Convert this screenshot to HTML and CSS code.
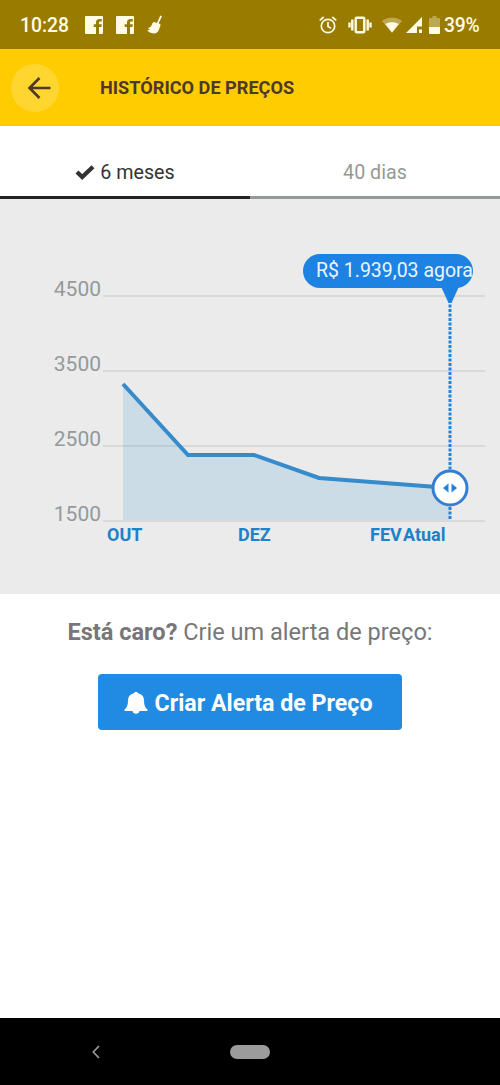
FILE: index.html
```html
<!DOCTYPE html>
<html lang="pt-BR">
<head>
<meta charset="utf-8">
<title>Histórico de Preços</title>
<link rel="stylesheet" href="styles.css">
</head>
<body>
<div class="screen">
  <div class="status">
    <span class="clock">10:28</span>
    <div class="notices">
      <svg width="18" height="18" viewBox="0 0 18 18"><path fill="currentColor" d="M1 0h16a1 1 0 0 1 1 1v16a1 1 0 0 1-1 1h-3v-7h2.400l.4-2.700H14V6.800c0-.8.3-1.300 1.300-1.300h1.500V3h-2.300c-2.300 0-3.500 1.400-3.500 3.500v1.800H8.700V11H11v7H1a1 1 0 0 1-1-1V1a1 1 0 0 1 1-1z"/></svg>
      <svg width="18" height="18" viewBox="0 0 18 18"><path fill="currentColor" d="M1 0h16a1 1 0 0 1 1 1v16a1 1 0 0 1-1 1h-3v-7h2.400l.4-2.700H14V6.800c0-.8.3-1.300 1.300-1.300h1.500V3h-2.300c-2.300 0-3.500 1.400-3.500 3.500v1.800H8.700V11H11v7H1a1 1 0 0 1-1-1V1a1 1 0 0 1 1-1z"/></svg>
      <svg width="16" height="19" viewBox="0 0 16 19"><path fill="currentColor" d="M13.300.5l1.700.8-3.300 7 2 1.500-1.500 4.200c-.8 2.500-2.300 4.300-4.400 4.500-3.200 0-6-1.200-7.500-3.300l2.600-.5-2.200-1.800c2.600.2 3.800-1.800 4.900-5.200l1.800-.8 2.600 1z"/></svg>
    </div>
    <div class="system">
      <svg width="18" height="18" viewBox="0 0 18 18" fill="none" stroke="currentColor" stroke-width="1.700"><circle cx="9" cy="10" r="6.700"/><path d="M9 6v4.500l3 1.700M.7 4.300l4-3.300M17.300 4.300l-4-3.300"/></svg>
      <svg class="vibrate" width="24" height="18" viewBox="0 0 24 18" fill="none" stroke="currentColor" stroke-width="2.400"><rect x="7.700" y="1.700" width="8.600" height="14.600" rx="1"/><path d="M4.300 3.500v11M19.700 3.500v11M1.500 6.500v5M22.500 6.500v5"/></svg>
      <svg class="wifi" width="20" height="16" viewBox="0 0 20 16"><path fill="currentColor" opacity=".35" d="M0 4C6-.8 14-.8 20 4L10 16z"/><path fill="currentColor" d="M3.300 7C7 4.800 13 4.800 16.700 7L10 15.500z"/></svg>
      <svg class="signal" width="16" height="16" viewBox="0 0 16 16"><path fill="currentColor" d="M16 0v9.500h-5V16H0zM13 12.500h3V16h-3z"/></svg>
      <svg class="battery" width="11" height="18" viewBox="0 0 11 18"><path fill="currentColor" opacity=".35" d="M3.500 0h4v2H10a1 1 0 0 1 1 1v8H0V3a1 1 0 0 1 1-1h2.500z"/><path fill="currentColor" d="M0 11h11v6a1 1 0 0 1-1 1H1a1 1 0 0 1-1-1z"/></svg>
      <span class="percent">39%</span>
    </div>
  </div>

  <header class="appbar">
    <div class="back">
      <svg width="24" height="24" viewBox="0 0 24 24" fill="none" stroke="currentColor" stroke-width="2.600"><path d="M23.500 12H3M12.500 2L2.500 12l10 10"/></svg>
    </div>
    <h1 class="title">HISTÓRICO DE PREÇOS</h1>
  </header>

  <nav class="tabs">
    <div class="tab tab-active">
      <svg width="20" height="16" viewBox="0 0 20 16"><path fill="none" stroke="currentColor" stroke-width="4.200" d="M2 7l5.200 5L18 1.700"/></svg>
      <span>6 meses</span>
    </div>
    <div class="tab"><span>40 dias</span></div>
  </nav>

  <svg class="chart" width="500" height="395" viewBox="0 199 500 395">
    <path class="grid" d="M103 296H485M103 371H485M103 446H485M103 521H485"/>
    <g class="scale">
      <text x="101" y="295.500">4500</text>
      <text x="101" y="370.500">3500</text>
      <text x="101" y="445.500">2500</text>
      <text x="101" y="520.500">1500</text>
    </g>
    <path class="area" d="M123 384L188 455H254L319 478L450 488V520H123z"/>
    <path class="line" d="M123 384L188 455H254L319 478L450 488"/>
    <g class="months">
      <text x="107" y="540.500">OUT</text>
      <text x="238" y="540.500">DEZ</text>
      <text x="370" y="540.500">FEV</text>
      <text x="403" y="540.500">Atual</text>
    </g>
    <path class="cursor" d="M450 300V520"/>
    <rect class="bubble" x="303" y="254" width="170" height="34" rx="17"/>
    <path class="bubble" d="M441 286.500h18L451.500 303h-3z"/>
    <text class="price" x="316" y="277">R$ 1.939,03 agora</text>
    <circle class="knob" cx="450" cy="488" r="17"/>
    <path class="arrows" d="M448.500 483.500v9l-5.500-4.500zM451.500 483.500v9l5.500-4.500z"/>
  </svg>

  <main class="alert">
    <p class="question"><b>Está caro?</b> Crie um alerta de preço:</p>
    <button class="create">
      <svg width="24" height="22" viewBox="0 0 24 22"><path fill="currentColor" d="M12 0c1 0 1.800.5 2 1.200 4 .8 6 3.500 6 7.300 0 4.500 1 7 3.500 9V19H15.500c-.3 1.700-1.700 2.800-3.500 2.800S8.800 20.700 8.500 19H.5v-1.500c2.500-2 3.500-4.500 3.500-9 0-3.800 2-6.500 6-7.300C10.200.5 11 0 12 0z"/></svg>
      <span>Criar Alerta de Preço</span>
    </button>
  </main>

  <footer class="navbar">
    <svg width="8" height="14" viewBox="0 0 8 14" fill="none" stroke="currentColor" stroke-width="1.700"><path d="M7 1L1.300 7 7 13"/></svg>
    <span class="pill"></span>
  </footer>
</div>
</body>
</html>
```
FILE: styles.css
```css
* { box-sizing: border-box; }
body { margin: 0; background: #fff; font-family: Roboto, "Liberation Sans", sans-serif; }
svg { display: block; flex: none; }
.screen { display: flex; flex-direction: column; width: 500px; height: 1085px; }

.status { display: flex; align-items: center; height: 49px; padding: 0 20px; background: #997b00; color: #fffbe6; }
.clock, .percent { font-size: 19.300px; font-weight: 500; line-height: 24px; }
.clock { width: 65px; padding-top: 2px; }
.notices { display: flex; align-items: center; gap: 13px; }
.system { display: flex; align-items: center; margin-left: auto; }
.vibrate { margin-left: 11px; }
.wifi { margin-left: 10px; }
.signal { margin-left: 4px; }
.battery { margin-left: 7px; }
.percent { width: 36px; margin-left: 4px; padding-top: 2px; letter-spacing: -.2px; }

.appbar { display: flex; align-items: center; height: 77px; padding-left: 11px; background: #ffcc02; color: #4d3926; }
.back { display: flex; align-items: center; justify-content: flex-end; width: 48px; height: 48px; padding-right: 8px; border-radius: 50%; background: #ffd52f; }
.title { margin: 0 0 0 41px; font-size: 18.150px; font-weight: 700; white-space: nowrap; }

.tabs { display: flex; height: 73px; }
.tab { display: flex; flex: 1; align-items: center; justify-content: center; gap: 5px; padding-top: 23px; border-bottom: 3px solid #929a97; color: #929a97; font-size: 19.700px; }
.tab-active { border-color: #222; color: #333; }

.chart { background: #ebebeb; }
.grid { stroke: #d9d9d9; stroke-width: 2; }
.scale { fill: #929a9c; font-size: 21px; text-anchor: end; }
.area { fill: #2d8fd5; fill-opacity: .16; }
.line { fill: none; stroke: #368bcb; stroke-width: 4; }
.months { fill: #1d82c8; font-size: 18px; font-weight: 700; }
.cursor { stroke: #2583de; stroke-width: 3; stroke-dasharray: 3 1.500; }
.bubble { fill: #1d82e2; }
.price { fill: #e9f6ff; font-size: 19.500px; }
.knob { fill: #fff; stroke: #347fd3; stroke-width: 3; }
.arrows { fill: #2381dc; }

.alert { display: flex; flex: 1; flex-direction: column; align-items: center; padding-top: 24px; }
.question { margin: 0; color: #777; font-size: 23.550px; line-height: 28px; white-space: nowrap; }
.create { display: flex; align-items: center; justify-content: center; gap: 6px; width: 304px; height: 56px; margin-top: 28px; padding: 2px 3px 0 0; border: 0; border-radius: 4px; background: #218ae3; color: #fff; font: 700 23.200px Roboto, "Liberation Sans", sans-serif; white-space: nowrap; }

.navbar { display: grid; grid-template-columns: 1fr 40px 1fr; align-items: center; height: 67px; padding-left: 92px; padding-right: 92px; background: #000; color: #999; }
.pill { width: 40px; height: 14px; border-radius: 7px; background: #9b9b9b; }
```
